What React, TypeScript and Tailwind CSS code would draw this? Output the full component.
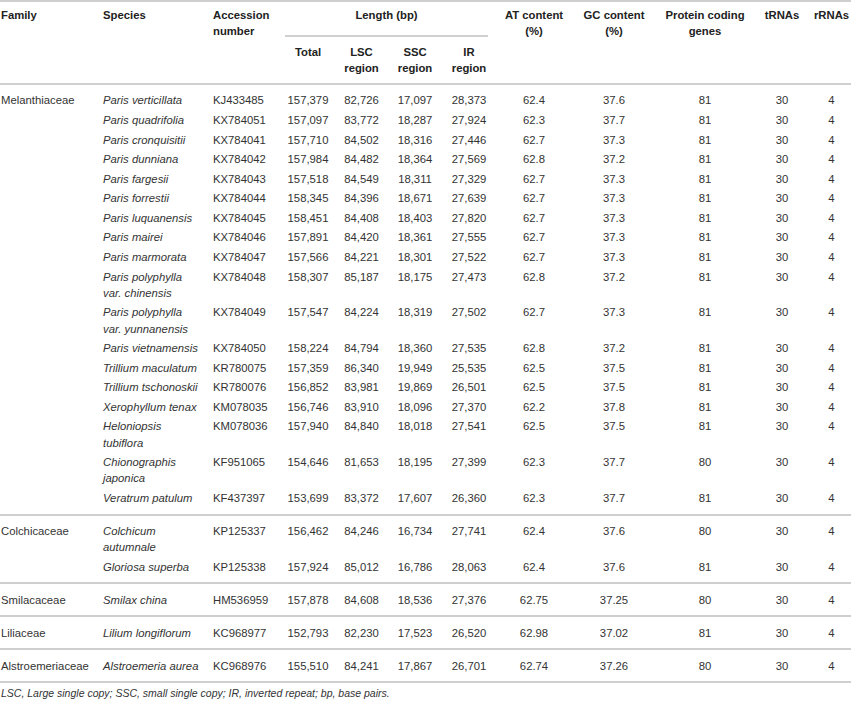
type Row = {
	species: string[];
	acc: string;
	total: string;
	lsc: string;
	ssc: string;
	ir: string;
	at: string;
	gc: string;
	pcg: string;
	trna: string;
	rrna: string;
};

type Group = { family: string; rows: Row[] };

function r(
	species: string[],
	acc: string,
	total: string,
	lsc: string,
	ssc: string,
	ir: string,
	at: string,
	gc: string,
	pcg: string,
): Row {
	return { species, acc, total, lsc, ssc, ir, at, gc, pcg, trna: "30", rrna: "4" };
}

const groups: Group[] = [
	{
		family: "Melanthiaceae",
		rows: [
			r(["Paris verticillata"], "KJ433485", "157,379", "82,726", "17,097", "28,373", "62.4", "37.6", "81"),
			r(["Paris quadrifolia"], "KX784051", "157,097", "83,772", "18,287", "27,924", "62.3", "37.7", "81"),
			r(["Paris cronquisitii"], "KX784041", "157,710", "84,502", "18,316", "27,446", "62.7", "37.3", "81"),
			r(["Paris dunniana"], "KX784042", "157,984", "84,482", "18,364", "27,569", "62.8", "37.2", "81"),
			r(["Paris fargesii"], "KX784043", "157,518", "84,549", "18,311", "27,329", "62.7", "37.3", "81"),
			r(["Paris forrestii"], "KX784044", "158,345", "84,396", "18,671", "27,639", "62.7", "37.3", "81"),
			r(["Paris luquanensis"], "KX784045", "158,451", "84,408", "18,403", "27,820", "62.7", "37.3", "81"),
			r(["Paris mairei"], "KX784046", "157,891", "84,420", "18,361", "27,555", "62.7", "37.3", "81"),
			r(["Paris marmorata"], "KX784047", "157,566", "84,221", "18,301", "27,522", "62.7", "37.3", "81"),
			r(["Paris polyphylla", "var. chinensis"], "KX784048", "158,307", "85,187", "18,175", "27,473", "62.8", "37.2", "81"),
			r(["Paris polyphylla", "var. yunnanensis"], "KX784049", "157,547", "84,224", "18,319", "27,502", "62.7", "37.3", "81"),
			r(["Paris vietnamensis"], "KX784050", "158,224", "84,794", "18,360", "27,535", "62.8", "37.2", "81"),
			r(["Trillium maculatum"], "KR780075", "157,359", "86,340", "19,949", "25,535", "62.5", "37.5", "81"),
			r(["Trillium tschonoskii"], "KR780076", "156,852", "83,981", "19,869", "26,501", "62.5", "37.5", "81"),
			r(["Xerophyllum tenax"], "KM078035", "156,746", "83,910", "18,096", "27,370", "62.2", "37.8", "81"),
			r(["Heloniopsis", "tubiflora"], "KM078036", "157,940", "84,840", "18,018", "27,541", "62.5", "37.5", "81"),
			r(["Chionographis", "japonica"], "KF951065", "154,646", "81,653", "18,195", "27,399", "62.3", "37.7", "80"),
			r(["Veratrum patulum"], "KF437397", "153,699", "83,372", "17,607", "26,360", "62.3", "37.7", "81"),
		],
	},
	{
		family: "Colchicaceae",
		rows: [
			r(["Colchicum", "autumnale"], "KP125337", "156,462", "84,246", "16,734", "27,741", "62.4", "37.6", "80"),
			r(["Gloriosa superba"], "KP125338", "157,924", "85,012", "16,786", "28,063", "62.4", "37.6", "81"),
		],
	},
	{
		family: "Smilacaceae",
		rows: [r(["Smilax china"], "HM536959", "157,878", "84,608", "18,536", "27,376", "62.75", "37.25", "80")],
	},
	{
		family: "Liliaceae",
		rows: [r(["Lilium longiflorum"], "KC968977", "152,793", "82,230", "17,523", "26,520", "62.98", "37.02", "81")],
	},
	{
		family: "Alstroemeriaceae",
		rows: [r(["Alstroemeria aurea"], "KC968976", "155,510", "84,241", "17,867", "26,701", "62.74", "37.26", "80")],
	},
];

const colWidths = [103, 110, 70, 50, 57, 50, 58, 72, 88, 94, 60, 39];

export default function App() {
	const line = "border-[#cfcfcf]";
	const th = `align-top font-bold text-[#222] pt-[5px] border-t-2 border-b-2 ${line}`;
	const sub = `align-top font-bold text-[#222] text-center pt-[6.9px] pb-[6.7px] border-b-2 ${line}`;

	return (
		<div className="w-[851px] bg-white font-['Liberation_Sans',Arial,sans-serif] text-[11.3px] leading-[16.2px] text-[#333]">
			<table className="w-[851px] table-fixed border-separate border-spacing-0">
				<colgroup>
					{colWidths.map((w, i) => (
						<col key={i} style={{ width: w }} />
					))}
				</colgroup>
				<thead>
					<tr>
						<th rowSpan={2} className={`${th} text-left pl-px`}>
							Family
						</th>
						<th rowSpan={2} className={`${th} text-left`}>
							Species
						</th>
						<th rowSpan={2} className={`${th} text-left`}>
							Accession
							<br />
							number
						</th>
						<th colSpan={4} className={`align-top font-bold text-[#222] pt-[5px] border-t-2 ${line}`}>
							<div className={`ml-[2px] mr-[10px] pb-[11.8px] border-b-2 ${line} text-center`}>
								Length (bp)
							</div>
						</th>
						<th rowSpan={2} className={`${th} text-center`}>
							AT content
							<br />
							(%)
						</th>
						<th rowSpan={2} className={`${th} text-center`}>
							GC content
							<br />
							(%)
						</th>
						<th rowSpan={2} className={`${th} text-center`}>
							Protein coding
							<br />
							genes
						</th>
						<th rowSpan={2} className={`${th} text-center`}>
							tRNAs
						</th>
						<th rowSpan={2} className={`${th} text-center`}>
							rRNAs
						</th>
					</tr>
					<tr>
						<th className={sub}>Total</th>
						<th className={sub}>
							LSC
							<br />
							region
						</th>
						<th className={sub}>
							SSC
							<br />
							region
						</th>
						<th className={sub}>
							IR
							<br />
							region
						</th>
					</tr>
				</thead>
				<tbody>
					{groups.map((g) =>
						g.rows.map((row, i) => {
							const first = i === 0;
							const last = i === g.rows.length - 1;
							const pad = `align-top ${first ? "pt-[7.4px]" : "pt-[1.7px]"} ${
								last ? `pb-[7.4px] border-b-2 ${line}` : "pb-[1.7px]"
							}`;
							return (
								<tr key={row.acc}>
									<td className={`${pad} pl-px`}>{first ? g.family : ""}</td>
									<td className={`${pad} italic`}>
										{row.species.map((s, k) => (
											<div key={k} className="whitespace-nowrap">
												{s}
											</div>
										))}
									</td>
									<td className={pad}>{row.acc}</td>
									<td className={`${pad} text-center`}>{row.total}</td>
									<td className={`${pad} text-center`}>{row.lsc}</td>
									<td className={`${pad} text-center`}>{row.ssc}</td>
									<td className={`${pad} text-center`}>{row.ir}</td>
									<td className={`${pad} text-center`}>{row.at}</td>
									<td className={`${pad} text-center`}>{row.gc}</td>
									<td className={`${pad} text-center`}>{row.pcg}</td>
									<td className={`${pad} text-center`}>{row.trna}</td>
									<td className={`${pad} text-center`}>{row.rrna}</td>
								</tr>
							);
						}),
					)}
				</tbody>
			</table>
			<p className="mt-[3px] pl-px text-[10.5px] leading-[14px] italic text-[#333]">
				LSC, Large single copy; SSC, small single copy; IR, inverted repeat; bp, base pairs.
			</p>
		</div>
	);
}
